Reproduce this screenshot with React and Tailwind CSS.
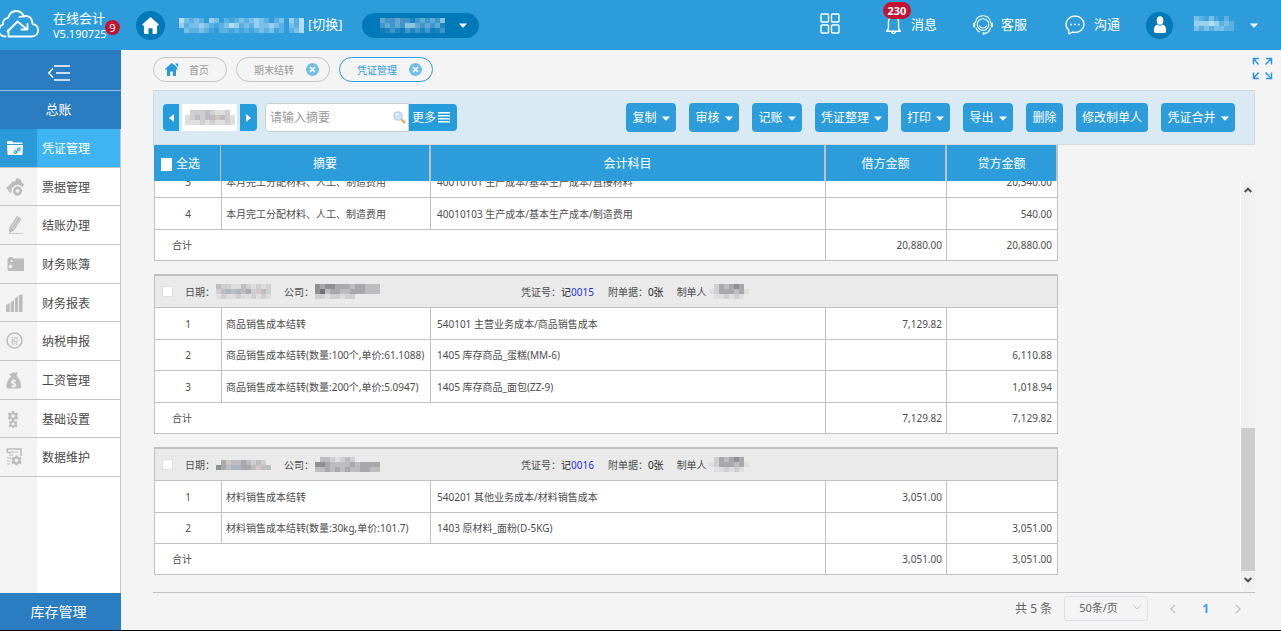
import React from "react";

const BLUES = {
  a: "#3fa5de", b: "#5ab1e1", c: "#78c0e7", d: "#98cfee", e: "#b4dcf3", f: "#2f9ddb",
};
const DEEP = {
  a: "#1c86c2", b: "#3d97ca", c: "#62a9d2", d: "#8dc3e2", e: "#4b8fc6", f: "#0f7dbc",
};
const GREYS = {
  a: "#dedede", b: "#cfcfd2", c: "#bdbdc0", d: "#a9a9ad", e: "#8f9094", f: "#6f7276", g: "#d2c8c0", h: "#aab6c6",
};

/* Redacted text, one letter per cell, "." leaves the cell empty. */
function Mosaic({ rows, palette, cell = 5, label }) {
  const w = Math.max(...rows.map((r) => r.length)) * cell;
  const h = rows.length * cell;
  return (
    <svg className="shrink-0" width={w} height={h} role="img" aria-label={label} shapeRendering="crispEdges">
      {rows.map((row, y) =>
        row.split("").map((c, x) =>
          c === "." ? null : (
            <rect key={x + "-" + y} x={x * cell} y={y * cell} width={cell} height={cell} fill={palette[c]} />
          )
        )
      )}
    </svg>
  );
}

function Caret({ className = "" }) {
  return (
    <svg className={"shrink-0 " + className} width="8" height="5" viewBox="0 0 8 5" fill="currentColor" aria-hidden="true">
      <path d="M0 .5h8L4.6 4.2Q4 4.8 3.4 4.2z" />
    </svg>
  );
}

function Logo() {
  return (
    <svg width="40" height="30" viewBox="0 0 40 30" fill="none" stroke="#fff" strokeWidth="1.800" strokeLinecap="round" strokeLinejoin="round" aria-hidden="true">
      <path d="M5.500 26.500C1.500 26.500-1 24-1 20.500c0-3 1.500-5 4-6C2.500 10.500 5 8 8.200 7.800 9.500 3.500 12 1 16 1c3.800 0 6.500 2 7.800 5.300 4.700-1.200 9 2 8.700 7.500 3.800.8 5.700 3.100 5.700 6.200 0 3.800-2.700 6.500-6.700 6.500H8.500V20" />
      <path d="M19.500 7c2-.8 3-.8 4.300-.5" />
      <path d="M7.500 21.500 17.500 11.500l9 7.500M27.500 14v5.500h-6" />
    </svg>
  );
}

function HomeGlyph({ size }) {
  return (
    <svg width={size} height={size} viewBox="0 0 16 16" fill="currentColor" aria-hidden="true">
      <path d="M8 0 .6 6.600c-.7.700-.4 1.400.4 1.400h.8v6.600c0 .8.500 1.400 1.300 1.400h3V10.500h3.800V16h3c.8 0 1.300-.6 1.300-1.400V8h.8c.8 0 1.100-.7.4-1.400z" />
    </svg>
  );
}

function TabHome() {
  return (
    <svg width="14" height="13" viewBox="0 0 14 13" fill="#2a9bd9" aria-hidden="true">
      <path d="M6.500 0 0 6l.8.900L2 5.900V13h3.200V8.500h2.700V13H11V5.900l1.200 1 .8-.9-1.300-1.200V3.500zM10.200.6h3v3h-1z" />
    </svg>
  );
}

function Bell() {
  return (
    <svg width="17" height="20" viewBox="0 0 17 21" fill="none" stroke="#fff" strokeWidth="1.500" strokeLinejoin="round" aria-hidden="true">
      <path d="M8.500 2C5 2 3.200 4.500 3.200 7.500V13c0 2-1 2.800-2 4h14.600c-1-1.200-2-2-2-4V7.500C13.800 4.500 12 2 8.500 2z" />
      <path d="M6.500 17.500c.3 2.600 3.700 2.600 4 0" />
    </svg>
  );
}

function Headset() {
  return (
    <svg width="20" height="20" viewBox="0 0 20 20" fill="none" stroke="#fff" strokeWidth="1.100" strokeLinecap="round" aria-hidden="true">
      <path d="M2.500 7.500C3 3.500 6 .8 10 .8S17 3.500 17.500 7.500" />
      <circle cx="10" cy="9.500" r="5.800" />
      <path d="M1.200 8.500v3M18.800 8.500v3" strokeWidth="2" />
      <path d="M6.500 11c1.500 2.600 5.500 2.600 7 0M17.500 13c-.8 3-3 5-6 5.500M3 13c.8 1.800 2 3 3.500 4" />
      <circle cx="10.800" cy="18.500" r=".8" fill="#fff" />
    </svg>
  );
}

function Chat() {
  return (
    <svg width="20" height="20" viewBox="0 0 20 20" fill="none" stroke="#fff" strokeWidth="1.300" strokeLinejoin="round" aria-hidden="true">
      <path d="M10 1C4.800 1 1 4.700 1 9.200c0 2.500 1 4.600 2.800 6L4 19l3.600-2c.8.200 1.600.3 2.400.3 5.200 0 9-3.700 9-8.100S15.200 1 10 1z" />
      <path d="M5.300 9.500h1.800M9.100 9.500h1.800M12.900 9.500h1.800" strokeWidth="1.600" />
    </svg>
  );
}

function Apps() {
  return (
    <svg width="20" height="21" viewBox="0 0 20 21" fill="none" stroke="#fff" strokeWidth="1.400" aria-hidden="true">
      <rect x="1" y="1" width="7.500" height="8" rx="1" />
      <rect x="11.500" y="1" width="7.500" height="8" rx="1" />
      <rect x="1" y="12" width="7.500" height="8" rx="1" />
      <rect x="11.500" y="12" width="7.500" height="8" rx="1" />
    </svg>
  );
}

function Expand() {
  return (
    <svg width="21" height="23" viewBox="0 0 21 23" fill="none" stroke="#2d94ec" strokeWidth="1.500" aria-hidden="true">
      <path d="M1.500 7.500V1.500H7M1.500 1.500l5 6M14 1.500h5.500v6M19.500 1.500l-6 6M1.500 15.500v6H7M1.500 21.500l5-6M14 21.500h5.500v-6M19.500 21.500l-6-6" />
    </svg>
  );
}

function Magnifier() {
  return (
    <svg width="13" height="13" viewBox="0 0 14 14" fill="none" aria-hidden="true">
      <path d="M8.500 8.500 12.500 12.500" stroke="#e3ac5c" strokeWidth="2.400" strokeLinecap="round" />
      <circle cx="5.500" cy="5.500" r="4.500" fill="#cfe5fa" stroke="#b9c9d8" strokeWidth="1.200" />
      <path d="M3 5c.3-1.400 1.300-2 2.500-2" stroke="#fff" strokeWidth="1.200" />
    </svg>
  );
}

const GEAR = "M5 0h2l.4 1.500 1 .5 1.500-.6L11.200 3l-1 1.200v1.600l1 1.200-1.300 1.700-1.500-.6-1 .5L7 10H5l-.4-1.400-1-.5-1.500.6L.8 7l1-1.200V4.200L.8 3l1.300-1.600 1.500.6 1-.5zM6 3.200a1.800 1.800 0 1 0 0 3.600 1.800 1.800 0 0 0 0-3.600z";

const ICONS = {
  folder: (
    <>
      <path d="M1 3.500c0-.8.400-1.500 1.200-1.500H6l1.200 1.500h8.300c.6 0 1 .4 1 1V5H1z" />
      <path d="M1 6h16l-.6 10H1.600z" />
      <path d="M9.800 11.200 8.500 12.500c-1 1.200.6 2.500 1.700 1.500l1.300-1.300M11 10.500l1.300-1.300c1.200-1 2.600.500 1.600 1.600l-1.300 1.400M10 12.800l2.500-2.400" fill="none" stroke="#2b9ad8" strokeWidth="1.100" />
    </>
  ),
  ticket: (
    <>
      <path d="M0 10.500 7 3l2 .5L11 0l4 1.500.5 3L18 6l-1 3-2-1-3-1.500-4 1.500-2.500 3V15L3 14l-1-2.500z" />
      <circle cx="11.500" cy="13" r="3.400" fill="none" stroke="currentColor" strokeWidth="2.200" />
      <path d="M11.500 8.500v9M7 13h9M8.500 10l6 6M14.500 10l-6 6" stroke="currentColor" strokeWidth="1.600" />
      <circle cx="11.500" cy="13" r="1.800" fill="#f3f3f3" />
    </>
  ),
  pencil: (
    <>
      <path d="M11 0 15.500 3 8 14.500 3 17l.3-5.200z" />
      <path d="M5 12 12 1.800M6.800 13l7.200-10" stroke="#f3f3f3" strokeWidth=".5" />
      <path d="M3 17.500h14" stroke="currentColor" strokeWidth=".8" />
    </>
  ),
  wallet: (
    <>
      <path d="M3.500 2h3v1.500H17c.6 0 1 .4 1 1V15c0 .6-.4 1-1 1H3c-.8 0-1.500-.6-1.500-1.500V4z" />
      <circle cx="5.500" cy="6" r="1" fill="#f3f3f3" />
      <circle cx="4.500" cy="11.500" r="1.700" fill="#f3f3f3" />
    </>
  ),
  bars: <path d="M0 11 3.700 9v9H0zM4.600 8.500 8 6v12H4.600zM8.900 4.500 12 2.200V18H8.900zM12.900 1.500 16.500 0v18h-3.600z" />,
  tax: (
    <>
      <circle cx="8.500" cy="8.500" r="7.500" fill="none" stroke="currentColor" strokeWidth="1.600" />
      <text x="8.500" y="11.800" fontSize="8" textAnchor="middle">税</text>
    </>
  ),
  money: (
    <>
      <path d="M3 2.500 5 3l2-2 2 1 3-1-1.500 4C13 7 15 11 15 15c0 2-1 2.500-3 2.500H3.500C1.500 17.500 0 17 .5 14.500 1 10.500 3 7 5 5.500z" />
      <text x="7.500" y="15.500" fontSize="10" fontWeight="700" textAnchor="middle" fill="#f3f3f3">$</text>
    </>
  ),
  gears: (
    <>
      <path transform="translate(1 1)" fillRule="evenodd" d={GEAR} />
      <path transform="translate(2 9.800) scale(.85)" fillRule="evenodd" d={GEAR} />
    </>
  ),
  data: (
    <>
      <path d="M1 1h14v7M1 1v3l4 1" fill="none" stroke="currentColor" strokeWidth="1.600" />
      <path d="M4 4h8M3 7h4M1 10h4M1 13h3M1 16h3" fill="none" stroke="currentColor" strokeWidth="1.200" />
      <path transform="translate(4.500 7.500)" fillRule="evenodd" d={GEAR} />
    </>
  ),
};

const MENU = [
  ["凭证管理", "folder"], ["票据管理", "ticket"], ["结账办理", "pencil"],
  ["财务账簿", "wallet"], ["财务报表", "bars"], ["纳税申报", "tax"],
  ["工资管理", "money"], ["基础设置", "gears"], ["数据维护", "data"],
];

const ACTIONS = [
  ["复制", true, "w-[50px]"], ["审核", true, "w-[50px]"], ["记账", true, "w-[50px]"],
  ["凭证整理", true, "w-[73px]"], ["打印", true, "w-[49px]"], ["导出", true, "w-[50px]"],
  ["删除", false, "w-[37px]"], ["修改制单人", false, "w-[72px]"], ["凭证合并", true, "w-[74px]"],
];

const VOUCHERS = [
  {
    rows: [
      [3, "本月完工分配材料、人工、制造费用", "40010101 生产成本/基本生产成本/直接材料", "", "20,340.00"],
      [4, "本月完工分配材料、人工、制造费用", "40010103 生产成本/基本生产成本/制造费用", "", "540.00"],
    ],
    total: "20,880.00",
  },
  {
    no: "0015",
    date: ["cbbaacbabab", "bchchcdbgcb", "abaabaababa"],
    company: ["edeedddcddccc", "efcddccdddccc", "bbabbabb....."],
    rows: [
      [1, "商品销售成本结转", "540101 主营业务成本/商品销售成本", "7,129.82", ""],
      [2, "商品销售成本结转(数量:100个,单价:61.1088)", "1405 库存商品_蛋糕(MM-6)", "", "6,110.88"],
      [3, "商品销售成本结转(数量:200个,单价:5.0947)", "1405 库存商品_面包(ZZ-9)", "", "1,018.94"],
    ],
    total: "7,129.82",
  },
  {
    no: "0016",
    date: [".dgccdcbcb.", "edchhddcgcc"],
    company: [".ccbabcb.....", "eedccccdcdddd", "ccdcdcdccddcc"],
    rows: [
      [1, "材料销售成本结转", "540201 其他业务成本/材料销售成本", "3,051.00", ""],
      [2, "材料销售成本结转(数量:30kg,单价:101.7)", "1403 原材料_面粉(D-5KG)", "", "3,051.00"],
    ],
    total: "3,051.00",
  },
];

function Header() {
  return (
    <header className="flex h-[50px] shrink-0 items-center bg-[#2d9cdb] text-[13px] text-white">
      <div className="flex flex-1 items-center">
        <div className="flex w-[136px] items-center">
          <Logo />
          <div className="relative ml-[13px] pt-[2px] leading-4">
            <div>在线会计</div>
            <div className="text-[11px]">V5.190725</div>
            <span className="absolute top-3 left-[52px] flex size-[15px] items-center justify-center rounded-full bg-[#c41230] text-[11px] leading-none">9</span>
          </div>
        </div>
        <button type="button" aria-label="主页" className="flex size-[29px] items-center justify-center rounded-full bg-[#0079b9]">
          <HomeGlyph size={17} />
        </button>
        <div className="ml-[14px] flex items-center">
          <Mosaic palette={BLUES} label="公司名称" rows={["ecbcb.dcfbabcbcdcb.bc.dbe", "dbccdcbabcedbcbdccdcb.cbe", ".cbbcba.bbabababcbcab.bce"]} />
          <button type="button" className="ml-1">[切换]</button>
        </div>
        <button type="button" aria-label="账套" className="ml-[19px] flex h-[25px] w-[117px] items-center justify-between rounded-full bg-[#0079b9] pr-3 pl-[18px]">
          <Mosaic palette={DEEP} label="账套名称" rows={["cbecebabcbcbd", "bcbcbddcbcbca", "fabafbababfab"]} />
          <Caret />
        </button>
      </div>
      <button type="button" aria-label="应用" className="mr-[45px] -mt-1"><Apps /></button>
      <button type="button" className="relative flex items-center gap-[9px]">
        <Bell />
        <span>消息</span>
        <span className="absolute -top-[13px] -left-[2px] flex h-[17px] w-7 items-center justify-center rounded-full bg-[#c41230] text-[11px] font-bold leading-none">230</span>
      </button>
      <button type="button" className="ml-9 flex items-center gap-2"><Headset /><span>客服</span></button>
      <button type="button" className="ml-[38px] flex items-center gap-[9px]"><Chat /><span>沟通</span></button>
      <button type="button" className="ml-[26px] flex items-center">
        <span className="flex size-[27px] items-center justify-center rounded-full bg-[#0079b9]">
          <svg width="14" height="18" viewBox="0 0 14 18" fill="#fff" aria-hidden="true">
            <ellipse cx="7" cy="4.500" rx="3.300" ry="4.300" />
            <path d="M4.500 8.500C2 9.300.8 11 .8 14.500c0 1.800.8 2.500 2.200 2.500h8c1.400 0 2.200-.7 2.200-2.500 0-3.500-1.200-5.200-3.700-6-1.500 1.500-3.500 1.500-5 0z" />
          </svg>
        </span>
        <span className="ml-[21px] pb-1"><Mosaic palette={BLUES} label="用户名" cell={5} rows={["cbaca.b.", "dddedbcb", "cbcbccbb"]} /></span>
        <Caret className="mr-[23px] ml-4" />
      </button>
    </header>
  );
}

function Sidebar() {
  return (
    <nav className="flex w-[121px] shrink-0 flex-col bg-[#2a7dc1] text-white">
      <button type="button" aria-label="收起菜单" className="flex h-[41px] shrink-0 items-center justify-center border-b border-[#8fc0e6] pt-[6px] pr-1">
        <svg width="22" height="16" viewBox="0 0 22 16" fill="none" stroke="#fff" strokeWidth="1.500" aria-hidden="true">
          <path d="M6 1h16M8 8h14M6 15h16M5 3.500.8 8 5 12.500" />
        </svg>
      </button>
      <div className="flex h-[38px] shrink-0 items-center justify-center pr-1 text-[13px]">总账</div>
      <div className="flex flex-1 flex-col border-r border-[#c4c4c4] bg-white bg-[linear-gradient(90deg,#f3f3f3_37px,#fff_37px)]">
        <ul className="flex h-[348px] flex-col text-xs text-[#4a4a4a]">
          {MENU.map(([name, icon], i) => (
            <li key={name} className="flex flex-1 border-b border-[#c4c4c4]">
              <a href={"#" + icon} className={"flex flex-1 items-center " + (i === 0 ? "bg-[#3eb4f2] text-white" : "")}>
                <span className={"flex w-[37px] self-stretch items-center pl-[6px] " + (i === 0 ? "bg-[#2b9ad8]" : "text-[#bcbcbc]")}>
                  <svg width="18" height="18" viewBox="0 0 18 18" fill="currentColor" aria-hidden="true">{ICONS[icon]}</svg>
                </span>
                <span className="pt-[2px] pl-[5px]">{name}</span>
              </a>
            </li>
          ))}
        </ul>
      </div>
      <button type="button" className="flex h-[37px] shrink-0 items-center justify-center pr-1 text-sm">库存管理</button>
    </nav>
  );
}

function CloseDot() {
  return (
    <button type="button" aria-label="关闭" className="flex size-[13px] items-center justify-center rounded-full bg-[#72bde4]">
      <svg width="7" height="7" viewBox="0 0 7 7" stroke="#fff" strokeWidth="1.500" aria-hidden="true"><path d="m1 1 5 5M6 1 1 6" /></svg>
    </button>
  );
}

function Tabs() {
  return (
    <div className="flex h-10 shrink-0 items-start justify-between pt-[7px] pr-2 pl-8 text-[10px] text-[#999]">
      <div className="flex gap-[9px]">
        <a href="#home" className="flex h-[25px] w-[74px] items-center gap-[10px] rounded-full border border-[#c4c4c4] pl-[11px]">
          <TabHome /><span className="pt-[2px]">首页</span>
        </a>
        <div className="flex h-[25px] w-[94px] items-center justify-between rounded-full border border-[#c4c4c4] pr-[10px] pl-[17px]">
          <a href="#closing" className="pt-[2px]">期末结转</a><CloseDot />
        </div>
        <div className="flex h-[25px] w-[94px] items-center justify-between rounded-full border border-[#2d9cdb] pr-[10px] pl-[17px] text-[#2d9cdb]">
          <a href="#vouchers" className="pt-[2px]">凭证管理</a><CloseDot />
        </div>
      </div>
      <button type="button" aria-label="全屏"><Expand /></button>
    </div>
  );
}

function Toolbar() {
  return (
    <div className="mr-[26px] ml-8 flex h-[55px] shrink-0 items-center justify-between border border-[#d6d9db] bg-[#d9eaf4] pr-[19px] pl-[9px] text-xs text-white">
      <div className="flex items-center">
        <button type="button" aria-label="上一期" className="flex h-[27px] w-4 items-center justify-center rounded-l bg-[#259cdb]">
          <svg width="5" height="8" viewBox="0 0 5 8" fill="#fff" aria-hidden="true"><path d="M5 0v8L0 4z" /></svg>
        </button>
        <span className="mx-[3px] flex h-[27px] w-[55px] items-center justify-center bg-white">
          <Mosaic palette={GREYS} label="会计期间" rows={[".bbbcbaab.", "abcbccgcba", "aaababaaba"]} />
        </span>
        <button type="button" aria-label="下一期" className="flex h-[27px] w-[17px] items-center justify-center rounded-r bg-[#259cdb]">
          <svg width="5" height="8" viewBox="0 0 5 8" fill="#fff" aria-hidden="true"><path d="M0 0v8l5-4z" /></svg>
        </button>
        <div className="ml-2 flex h-[29px] w-36 items-center rounded-l border border-[#ccc] bg-white pr-[2px]">
          <input aria-label="摘要" placeholder="请输入摘要" className="w-full min-w-0 flex-1 bg-transparent pl-1 text-xs text-[#555] outline-none placeholder:text-[#999]" />
          <button type="button" aria-label="搜索"><Magnifier /></button>
        </div>
        <button type="button" className="flex h-[27px] w-12 items-center gap-[2px] rounded-r bg-[#259cdb] pl-[3px]">
          <span>更多</span>
          <svg width="12" height="11" viewBox="0 0 12 11" fill="#fff" aria-hidden="true">
            <path d="M0 0h12v1.600H0zM0 3h12v1.600H0zM0 6h12v1.600H0zM0 9h12v1.600H0z" />
          </svg>
        </button>
      </div>
      <div className="flex gap-[13px]">
        {ACTIONS.map(([name, menu, width]) => (
          <button key={name} type="button" className={"flex h-[29px] items-center justify-center gap-[5px] rounded bg-[#2d9cdb] pt-px whitespace-nowrap " + width}>
            {name}
            {menu && <Caret />}
          </button>
        ))}
      </div>
    </div>
  );
}

function Voucher({ v }) {
  const cell = "border-r border-b border-[#c0c0c0]";
  return (
    <table className="w-[904px] shrink-0 table-fixed border-separate border-spacing-0 border-l border-[#c0c0c0] bg-white">
      <colgroup>
        <col className="w-[67px]" /><col className="w-[209px]" /><col className="w-[395px]" /><col className="w-[121px]" /><col className="w-[111px]" />
      </colgroup>
      <tbody>
        {v.no && (
          <tr>
            <td colSpan={5} className="h-[34px] border-t-2 border-r border-b border-[#c0c0c0] bg-[#eaeaea] p-0">
              <div className="flex items-center">
                <div className="flex w-[366px] items-center pl-[7px]">
                  <input type="checkbox" aria-label={"选择凭证 " + v.no} className="mr-[12px] size-[11px] appearance-none rounded-[2px] border border-[#dcdfe6] bg-white" />
                  <span className="mr-px">日期：</span>
                  <span className="w-[68px]"><Mosaic palette={GREYS} label="日期" rows={v.date} /></span>
                  <span className="mr-px">公司：</span>
                  <Mosaic palette={GREYS} label="公司" rows={v.company} />
                </div>
                <span>凭证号：</span>
                <span className="mr-[14px] text-[#222]">记<a href={"#" + v.no} className="text-[#2233dd]">{v.no}</a></span>
                <span>附单据：</span>
                <span className="mr-[13px] text-[#222]">0张</span>
                <span className="mr-[2px]">制单人</span>
                <Mosaic palette={GREYS} label="制单人" rows={[".bdcded.", "abdddcda", ".aababa."]} />
              </div>
            </td>
          </tr>
        )}
        {v.rows.map(([n, memo, account, debit, credit]) => (
          <tr key={n} className={n === 2 ? "h-[31px]" : "h-8"}>
            <td className={cell + " p-0 text-center"}>{n}</td>
            <td className={cell + " py-0 pr-0 pl-1 whitespace-nowrap"}>{memo}</td>
            <td className={cell + " py-0 pr-0 pl-[6px]"}>{account}</td>
            <td className={cell + " py-0 pr-1 pl-0 text-right"}>{debit}</td>
            <td className={cell + " py-0 pr-[5px] pl-0 text-right"}>{credit}</td>
          </tr>
        ))}
        <tr className="h-[31px]">
          <td colSpan={3} className={cell + " py-0 pl-[17px]"}>合计</td>
          <td className={cell + " py-0 pr-1 text-right"}>{v.total}</td>
          <td className={cell + " py-0 pr-[5px] text-right"}>{v.total}</td>
        </tr>
      </tbody>
    </table>
  );
}

function Ledger() {
  const head = "border-r-2 border-[#c0c0c0] p-0 font-normal";
  return (
    <div className="mr-[26px] ml-8 flex min-h-0 flex-1 flex-col border-b border-[#c0c0c0]">
      <table className="ml-px h-9 w-[904px] shrink-0 table-fixed border-separate border-spacing-0 bg-[#2d9cdb] text-xs text-white">
        <colgroup>
          <col className="w-[67px]" /><col className="w-[210px]" /><col className="w-[395px]" /><col className="w-[121px]" /><col className="w-[111px]" />
        </colgroup>
        <thead>
          <tr>
            <th className="border-r border-[#c0c0c0] p-0 font-normal">
              <label className="flex items-center gap-1 pt-[2px] pl-[7px]">
                <input type="checkbox" className="h-[13px] w-[11px] appearance-none bg-white" />
                全选
              </label>
            </th>
            <th className={head + " pt-[2px]"}>摘要</th>
            <th className={head + " pt-[2px]"}>会计科目</th>
            <th className={head + " pt-[2px]"}>借方金额</th>
            <th className={head + " pt-[2px]"}>贷方金额</th>
          </tr>
        </thead>
      </table>
      <div className="flex min-h-0 flex-1 justify-between">
        <div className="ml-px flex min-h-0 flex-col justify-end gap-[13px] overflow-hidden pb-[17px] text-[10px] leading-4 text-[#4d4d4d]">
          {VOUCHERS.map((v, i) => <Voucher key={i} v={v} />)}
        </div>
        <div className="mb-[3px] flex w-[15px] flex-col items-center border-l border-white bg-[#f0f0f0]">
          <svg className="mt-[6px] shrink-0" width="8" height="6" viewBox="0 0 8 6" fill="none" stroke="#505050" strokeWidth="2" aria-hidden="true"><path d="M.7 5 4 1.700 7.300 5" /></svg>
          <div className="flex-1" />
          <div className="h-[35%] w-full bg-[#cdcdcd]" />
          <svg className="mt-[6px] mb-[6px] shrink-0" width="8" height="6" viewBox="0 0 8 6" fill="none" stroke="#505050" strokeWidth="2" aria-hidden="true"><path d="M.7 1 4 4.300 7.300 1" /></svg>
        </div>
      </div>
    </div>
  );
}

function Pager() {
  return (
    <footer className="flex h-[37px] shrink-0 items-start justify-end pt-[3px] pr-10 text-xs text-[#606266]">
      <div className="flex h-[25px] items-center">
        <span className="mr-3">共 5 条</span>
        <div className="relative">
          <select aria-label="每页条数" defaultValue="50" className="h-[25px] w-[84px] appearance-none rounded-[3px] border border-[#dcdfe6] bg-transparent pl-[14px] text-[11px]">
            <option value="50">50条/页</option>
            <option value="100">100条/页</option>
          </select>
          <svg className="pointer-events-none absolute top-[9px] right-[7px]" width="8" height="5" viewBox="0 0 8 5" fill="none" stroke="#c0c4cc" aria-hidden="true"><path d="m.5.5 3.500 3.500L7.500.5" /></svg>
        </div>
        <button type="button" aria-label="上一页" className="ml-[22px]">
          <svg width="6" height="10" viewBox="0 0 6 10" fill="none" stroke="#c0c4cc" strokeWidth="1.500" aria-hidden="true"><path d="M5 1 1 5l4 4" /></svg>
        </button>
        <button type="button" className="mx-[26px] font-bold text-[#409eff]">1</button>
        <button type="button" aria-label="下一页">
          <svg width="6" height="10" viewBox="0 0 6 10" fill="none" stroke="#c0c4cc" strokeWidth="1.500" aria-hidden="true"><path d="m1 1 4 4-4 4" /></svg>
        </button>
      </div>
    </footer>
  );
}

export default function App() {
  return (
    <div className="flex h-screen flex-col overflow-hidden border-b border-[#08080c] bg-[#f4f4f4] font-['Noto_Sans','Noto_Sans_CJK_SC',sans-serif]">
      <Header />
      <div className="flex min-h-0 flex-1">
        <Sidebar />
        <main className="flex min-w-0 flex-1 flex-col">
          <Tabs />
          <Toolbar />
          <Ledger />
          <Pager />
        </main>
      </div>
    </div>
  );
}
